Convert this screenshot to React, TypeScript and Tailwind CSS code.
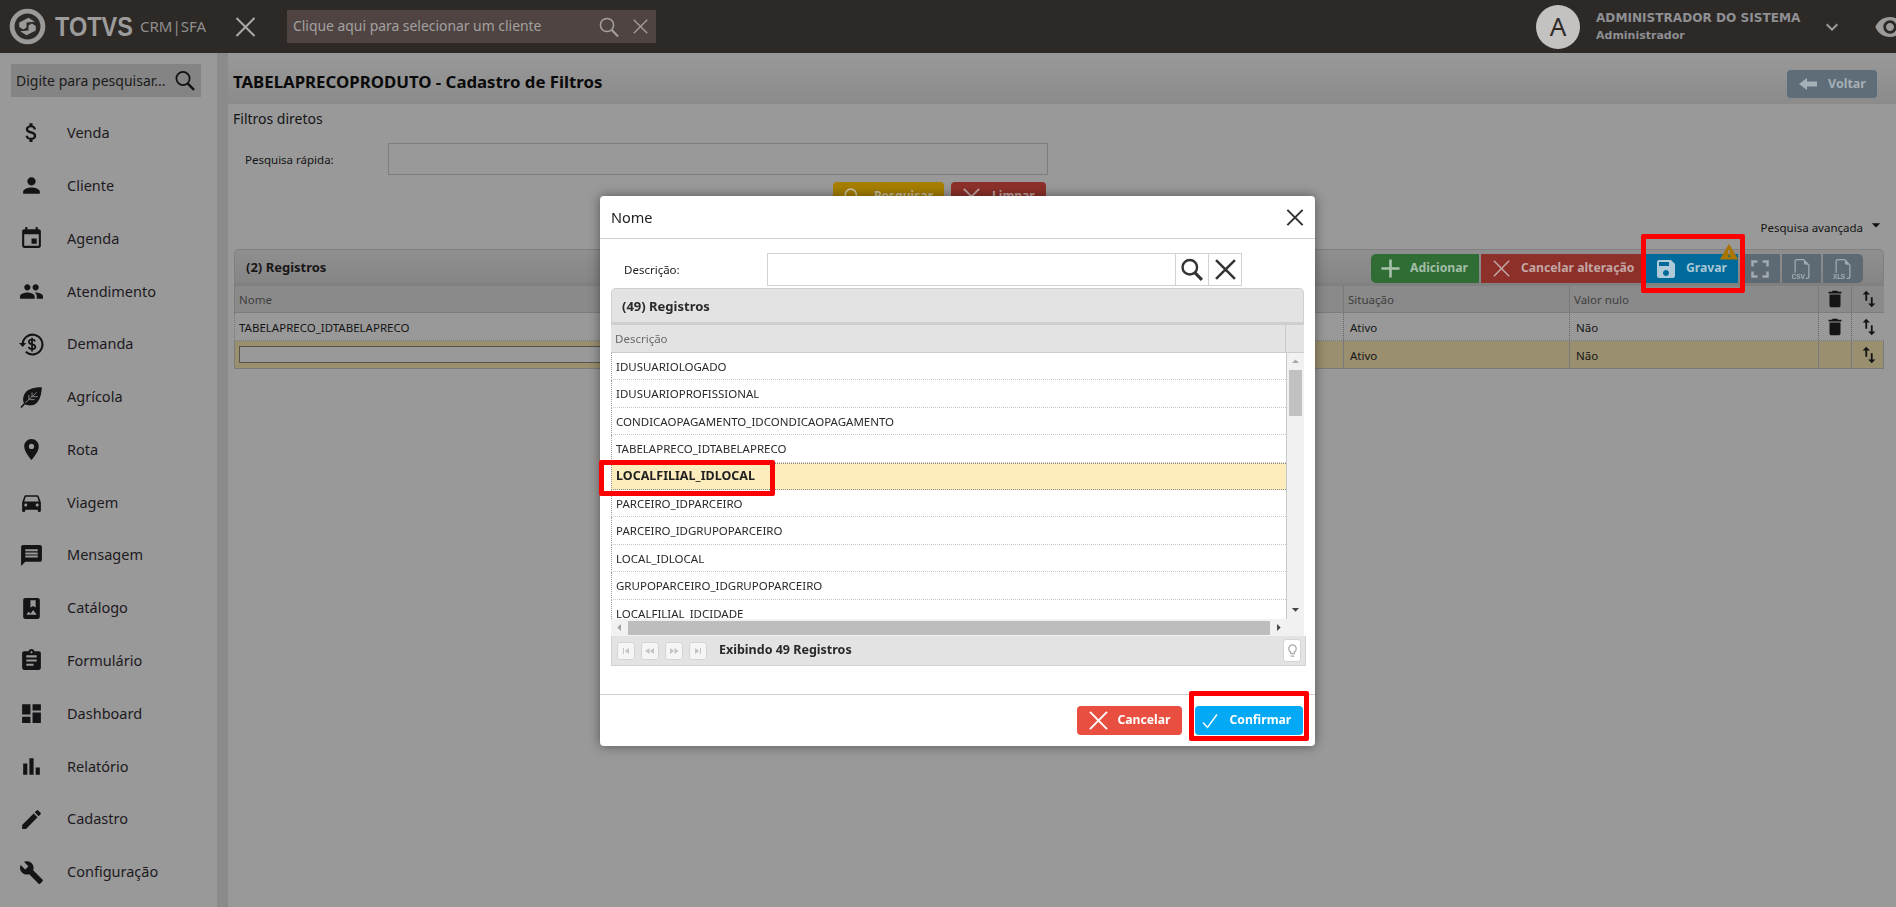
import React from "react";
import {
  MdAttachMoney, MdPerson, MdEvent, MdPeople, MdPlace, MdDirectionsCar, MdMessage,
  MdPhotoAlbum, MdAssignment, MdDashboard, MdBarChart, MdEdit, MdBuild, MdSave, MdFullscreen,
  MdDelete, MdSwapVert, MdVisibility, MdKeyboardArrowDown, MdWarning, MdAdd,
  MdSkipPrevious, MdSkipNext, MdFastRewind, MdFastForward, MdArrowDropDown, MdArrowDropUp, MdArrowLeft, MdArrowRight,
  MdOutlineLightbulb,
} from "react-icons/md";
import { BsFiletypeCsv, BsFiletypeXls } from "react-icons/bs";

const Cross = ({ className = "", sw = 2 }: { className?: string; sw?: number }) => (
  <svg viewBox="0 0 20 20" className={className} fill="none" stroke="currentColor" strokeWidth={sw}>
    <path d="M1 1L19 19M19 1L1 19" />
  </svg>
);

const Lens = ({ className = "", sw = 2 }: { className?: string; sw?: number }) => (
  <svg viewBox="0 0 20 20" className={className} fill="none" stroke="currentColor" strokeWidth={sw}>
    <circle cx="8" cy="8" r="6.6" />
    <path d="M12.6 12.8L19 19.4" strokeWidth={sw + 0.6} />
  </svg>
);

const DemandaIcon = ({ className = "" }: { className?: string }) => (
  <svg viewBox="0 0 24 24" className={className} fill="none" stroke="currentColor">
    <path d="M3.5 12a9.5 9.5 0 1 1 3 7" strokeWidth="2" />
    <path d="M0 10.5h7l-3.5 4z" fill="currentColor" stroke="none" />
    <path d="M15.5 9.2c-.4-1.2-1.6-1.8-3-1.8-1.7 0-3 .8-3 2.2 0 3 6.2 1.6 6.2 4.6 0 1.4-1.4 2.2-3.1 2.2-1.6 0-3-.7-3.3-2.1M12.5 5.6v13" strokeWidth="1.7" />
  </svg>
);

const LeafIcon = ({ className = "" }: { className?: string }) => (
  <svg viewBox="0 0 24 24" className={className} fill="none">
    <path d="M22 3C13 3 6.5 5 4.5 11.5c-1.2 4-.3 6.3 1.2 8C9 21.5 15 21 18 17c3-4 3.5-9 4-14z" fill="currentColor" />
    <path d="M2 22.5L6 18" stroke="currentColor" strokeWidth="1.6" />
    <path d="M6 18L17 8M9.5 15v-4.5M12.5 12.3V8M10 15h5M13 12.2h5" stroke="#999999" strokeWidth="0.8" />
  </svg>
);

const ArrowLeftIcon = ({ className = "" }: { className?: string }) => (
  <svg viewBox="0 0 18 12" className={className} fill="currentColor">
    <path d="M0 6L8 0v3.6h10v4.8H8V12z" />
  </svg>
);

const menu: [string, React.ComponentType<{ className?: string }>][] = [
  ["Venda", MdAttachMoney], ["Cliente", MdPerson], ["Agenda", MdEvent], ["Atendimento", MdPeople],
  ["Demanda", DemandaIcon], ["Agrícola", LeafIcon], ["Rota", MdPlace], ["Viagem", MdDirectionsCar],
  ["Mensagem", MdMessage], ["Catálogo", MdPhotoAlbum], ["Formulário", MdAssignment], ["Dashboard", MdDashboard],
  ["Relatório", MdBarChart], ["Cadastro", MdEdit], ["Configuração", MdBuild],
];

const rows = [
  "IDUSUARIOLOGADO", "IDUSUARIOPROFISSIONAL", "CONDICAOPAGAMENTO_IDCONDICAOPAGAMENTO", "TABELAPRECO_IDTABELAPRECO",
  "LOCALFILIAL_IDLOCAL", "PARCEIRO_IDPARCEIRO", "PARCEIRO_IDGRUPOPARCEIRO", "LOCAL_IDLOCAL",
  "GRUPOPARCEIRO_IDGRUPOPARCEIRO", "LOCALFILIAL_IDCIDADE",
];

const gridCols = "grid grid-cols-[1108px_226px_249px_33px_34px]";

function Sidebar() {
  return (
    <aside className="w-[217px] shrink-0 bg-[#999999] pt-[11px]">
      <div className="ml-[11px] w-[190px] h-[33px] bg-[#848484] flex items-center justify-between pl-[5px] pr-[6px] text-[14px] text-[#1b1b1b]">
        <span>Digite para pesquisar...</span>
        <Lens className="w-[20px] h-[21px] text-[#111]" sw={1.8} />
      </div>
      <nav className="mt-[9.6px]">
        {menu.map(([label, Icon]) => (
          <div key={label} className="h-[52.8px] flex items-center text-[14.5px] text-[#1d1a1e]">
            <span className="w-[67px] pl-[19px] shrink-0 flex">
              <Icon className="w-[25px] h-[25px] text-[#141416]" />
            </span>
            <span>{label}</span>
          </div>
        ))}
      </nav>
    </aside>
  );
}

function Header() {
  return (
    <header className="h-[53px] shrink-0 bg-[#2d2926] flex items-center text-[#9c9c9c] overflow-hidden">
      <svg viewBox="0 0 38 38" className="w-[37px] h-[37px] ml-[9px] shrink-0 text-[#9a9a9a]">
        <circle cx="19" cy="19" r="15.8" fill="none" stroke="currentColor" strokeWidth="5" />
        <path d="M10.5 15L20 10l6.5 4-8.5 1v5l-3.5 2-4-2.5z" fill="currentColor" />
        <path d="M27.5 23L18 28l-6.5-4 8.5-1v-5l3.5-2 4 2.5z" fill="currentColor" />
      </svg>
      <div className="ml-[9px] w-[77px] shrink-0 font-bold text-[28px] leading-none origin-left scale-x-[0.84] font-['Liberation_Sans',sans-serif] whitespace-nowrap">TOTVS</div>
      <div className="ml-[8px] text-[15px] shrink-0 whitespace-nowrap text-[#8f8f8f]">CRM|SFA</div>
      <Cross className="ml-[29px] w-[21px] h-[20px] shrink-0 text-[#aaaaaa]" sw={2} />
      <div className="ml-[31px] w-[369px] h-[33px] shrink-0 bg-[#4f4441] flex items-center justify-between pl-[6px] pr-[8px] text-[13.9px] text-[#a3a1a1]">
        <span>Clique aqui para selecionar um cliente</span>
        <div className="flex items-center gap-[14px]">
          <Lens className="w-[20px] h-[20px] text-[#a5a1a0]" sw={1.5} />
          <Cross className="w-[15px] h-[15px] text-[#a5a1a0]" sw={1.7} />
        </div>
      </div>
      <div className="ml-auto flex items-center shrink-0">
        <div className="w-[44px] h-[44px] rounded-full bg-[#c4c2c1] flex items-center justify-center text-[26px] text-[#2e2a28]">A</div>
        <div className="ml-[16px] w-[224px] font-['DejaVu_Sans',sans-serif] font-bold leading-[17px] text-[#8e9094]">
          <div className="text-[12.1px] whitespace-nowrap">ADMINISTRADOR DO SISTEMA</div>
          <div className="text-[11px]">Administrador</div>
        </div>
        <MdKeyboardArrowDown className="w-[24px] h-[24px] text-[#9d9d9d]" />
        <MdVisibility className="w-[32px] h-[32px] text-[#9b9b9b] ml-[30px] -mr-[10px]" />
      </div>
    </header>
  );
}

function ActionBtn({ className, children }: { className: string; children: React.ReactNode }) {
  return <div className={`h-[29px] flex items-center shrink-0 font-bold text-[12.2px] ${className}`}>{children}</div>;
}

const Sort = () => <MdSwapVert className="w-[22px] h-[22px] text-[#141414]" />;

function MainGrid() {
  return (
    <section className="mx-[6px] mr-[5px]">
      <div className="h-[37px] rounded-t-[5px] border border-b-[3px] border-[#808080] bg-gradient-to-b from-[#8f8f8f] to-[#858585] flex justify-between pl-[11px] pr-[20px] pt-[4px]">
        <span className="font-bold text-[13px] text-[#1a1718] mt-[4px]">(2) Registros</span>
        <div className="flex">
          <ActionBtn className="w-[108px] bg-[#2f6d35] text-[#a3bea7] rounded-l-[5px] pl-[4px] gap-[4px]">
            <MdAdd className="w-[31px] h-[31px] text-[#a9c2ab]" /><span>Adicionar</span>
          </ActionBtn>
          <ActionBtn className="w-[161px] ml-[2px] bg-[#8d302a] text-[#c2a6a4] pl-[12px] gap-[11px]">
            <Cross className="w-[17px] h-[17px] text-[#c2aaa8]" sw={1.7} /><span>Cancelar alteração</span>
          </ActionBtn>
          <ActionBtn className="w-[92px] ml-[4px] bg-[#006a9a] text-[#a8c7d6] pl-[8px] gap-[8px]">
            <MdSave className="w-[24px] h-[24px] text-[#aecad8]" /><span>Gravar</span>
          </ActionBtn>
          <ActionBtn className="w-[40px] ml-[2px] bg-[#5d6a74] justify-center"><MdFullscreen className="w-[30px] h-[30px] text-[#a3aab0]" /></ActionBtn>
          <ActionBtn className="w-[39px] ml-[2px] bg-[#5d6a74] justify-center"><BsFiletypeCsv className="w-[20px] h-[20px] text-[#a3aab0]" /></ActionBtn>
          <ActionBtn className="w-[40px] ml-[2px] bg-[#5d6a74] justify-center rounded-r-[5px]"><BsFiletypeXls className="w-[20px] h-[20px] text-[#a3aab0]" /></ActionBtn>
        </div>
      </div>
      <div className={`${gridCols} h-[27px] bg-[#8a8a8a] text-[11.5px] text-[#3e3e3e] border-l border-b border-[#7c7c7c]`}>
        <div className="pl-[4px] pt-[2px] flex items-center">Nome</div>
        <div className="pl-[4px] pt-[2px] flex items-center border-l border-[#7a7a7a]">Situação</div>
        <div className="pl-[4px] pt-[2px] flex items-center border-l border-[#7a7a7a]">Valor nulo</div>
        <div className="flex items-center justify-center border-l border-[#7a7a7a]"><MdDelete className="w-[22px] h-[22px] text-[#141414]" /></div>
        <div className="flex items-center justify-center border-l border-[#7a7a7a]"><Sort /></div>
      </div>
      <div className={`${gridCols} h-[28px] text-[11.5px] text-[#151515] border-l border-b border-dotted border-l-[#777] border-b-[#7a7a7a]`}>
        <div className="pl-[4px] pt-[2px] flex items-center">TABELAPRECO_IDTABELAPRECO</div>
        <div className="pl-[6px] pt-[2px] flex items-center border-l border-dotted border-[#666]">Ativo</div>
        <div className="pl-[6px] pt-[2px] flex items-center border-l border-dotted border-[#666]">Não</div>
        <div className="flex items-center justify-center border-l border-dotted border-[#666]"><MdDelete className="w-[22px] h-[22px] text-[#141414]" /></div>
        <div className="flex items-center justify-center border-l border-dotted border-[#666]"><Sort /></div>
      </div>
      <div className={`${gridCols} h-[28px] bg-[#9a8f6f] text-[11.5px] text-[#151515] border border-t-0 border-[#7a7a7a]`}>
        <div className="flex items-center pl-[4px]">
          <div className="w-[900px] h-[17px] bg-[#999999] border border-[#55554e]" />
        </div>
        <div className="pl-[6px] pt-[2px] flex items-center border-l border-[#7a7a7a]">Ativo</div>
        <div className="pl-[6px] pt-[2px] flex items-center border-l border-[#7a7a7a]">Não</div>
        <div className="border-l border-[#7a7a7a]" />
        <div className="flex items-center justify-center border-l border-[#7a7a7a]"><Sort /></div>
      </div>
    </section>
  );
}

function Content() {
  return (
    <main className="flex-1 min-w-0 flex flex-col">
      <div className="h-[51px] shrink-0 bg-gradient-to-b from-[#999999] to-[#8b8b8b] flex items-start justify-between pl-[5px] pr-[19px] pt-[17px]">
        <h1 className="font-bold text-[16.8px] leading-[24px] text-[#0a0a0a]">TABELAPRECOPRODUTO - Cadastro de Filtros</h1>
        <div className="w-[90px] h-[28px] bg-[#5f6d78] rounded-[4px] flex items-center pl-[12px] gap-[11px] font-bold text-[12.5px] text-[#a5afb6]">
          <ArrowLeftIcon className="w-[18px] h-[12px]" /><span>Voltar</span>
        </div>
      </div>
      <div className="flex-1 bg-[#999999] mr-[7px] text-[#141414] pt-[6px]">
        <div className="pl-[5px] text-[14px] leading-[18px]">Filtros diretos</div>
        <div className="mt-[15px] flex items-center h-[32px]">
          <span className="w-[160px] pl-[17px] pt-[2px] text-[11.5px] shrink-0">Pesquisa rápida:</span>
          <div className="w-[660px] h-[32px] border border-[#7d7d7d]" />
        </div>
        <div className="mt-[7px] flex ml-[605px] gap-[7px]">
          <ActionBtn className="w-[111px] bg-[#a77f00] text-[#c9c0a0] rounded-[4px] pl-[11px] gap-[13px]">
            <Lens className="w-[17px] h-[17px] text-[#c9c0a0]" />Pesquisar
          </ActionBtn>
          <ActionBtn className="w-[95px] bg-[#8d302a] text-[#c2a6a4] rounded-[4px] pl-[12px] gap-[12px]">
            <Cross className="w-[17px] h-[17px] text-[#c2aaa8]" />Limpar
          </ActionBtn>
        </div>
        <div className="h-[38px] flex justify-end items-start pt-[7px] pr-[3px] text-[11.5px]">
          <span className="leading-[20px]">Pesquisa avançada</span>
          <MdArrowDropDown className="w-[20px] h-[20px] ml-[3px] -mt-[3px] text-[#111]" />
        </div>
        <MainGrid />
      </div>
    </main>
  );
}

function Modal() {
  return (
    <div className="fixed left-[600px] top-[196px] w-[715px] h-[550px] bg-white rounded-[4px] shadow-[0_0_12px_rgba(0,0,0,0.45)] flex flex-col text-[#222]">
      <div className="h-[43px] shrink-0 border-b border-[#d0d0d0] flex items-center justify-between pl-[11px] pr-[11px]">
        <span className="text-[14.5px] pt-[1px] text-[#222]">Nome</span>
        <Cross className="w-[18px] h-[17px] text-[#333]" sw={2.4} />
      </div>
      <div className="flex-1 px-[11px]">
        <div className="mt-[14px] h-[33px] flex items-center">
          <span className="w-[156px] pl-[13px] pt-[1px] text-[11.5px]">Descrição:</span>
          <div className="h-[33px] w-[475px] border border-[#d2d2d2] flex">
            <div className="flex-1" />
            <div className="w-[33px] border-l border-[#d2d2d2] flex items-center justify-center"><Lens className="w-[22px] h-[23px] text-[#333]" sw={2.2} /></div>
            <div className="w-[33px] border-l border-[#d2d2d2] flex items-center justify-center"><Cross className="w-[21px] h-[21px] text-[#333]" sw={2.4} /></div>
          </div>
        </div>
        <div className="mt-[2px] h-[37px] rounded-t-[5px] border border-b-[3px] border-[#cfcfcf] bg-[#e3e3e3] flex items-center pl-[10px] pt-[2px] font-bold text-[13px] text-[#2a2a2a]">(49) Registros</div>
        <div className="h-[28px] bg-[#e3e3e3] border-b border-[#cccccc] flex text-[11.5px] text-[#6a6a6a]">
          <div className="w-[675px] pl-[4px] flex items-center border-r border-[#c8c8c8]">Descrição</div>
        </div>
        <div className="flex h-[283px]">
          <div className="w-[676px] flex flex-col">
            <div className="h-[266px] overflow-hidden border-r border-[#c8c8c8]">
              {rows.map((r) => {
                const sel = r === "LOCALFILIAL_IDLOCAL";
                return (
                  <div key={r} className={`h-[27.4px] shrink-0 pl-[4px] pt-[1px] flex items-center border-l border-dotted border-l-[#999] ${sel ? "bg-[#fdedbd] font-bold text-[12.5px] text-[#222] border-y border-y-[#8a8a8a]" : "text-[11.5px] border-b border-b-[#c8c8c8] text-[#2a2a2a]"}`}>{r}</div>
                );
              })}
            </div>
            <div className="h-[17px] bg-[#f1f1f1] flex items-center">
              <MdArrowLeft className="w-[17px] h-[17px] text-[#a0a0a0]" />
              <div className="flex-1 h-[14px] bg-[#bdbdbd]" />
              <MdArrowRight className="w-[17px] h-[17px] text-[#444]" />
            </div>
          </div>
          <div className="flex-1 bg-[#f1f1f1] flex flex-col items-center">
            <MdArrowDropUp className="w-[17px] h-[17px] text-[#a8a8a8]" />
            <div className="w-[13px] h-[46px] bg-[#c1c1c1]" />
            <MdArrowDropDown className="w-[17px] h-[17px] mt-[185px] text-[#444]" />
          </div>
        </div>
        <div className="h-[30px] -mr-[2px] bg-[#e3e3e3] border-b border-x border-[#d2d2d2] flex items-center pl-[5px] pr-[4px] font-bold text-[12.5px] text-[#2a2a2a]">
          {[MdSkipPrevious, MdFastRewind, MdFastForward, MdSkipNext].map((I, i) => (
            <span key={i} className="w-[18px] h-[18px] mr-[6px] rounded-[3px] bg-[#f5f5f5] border border-[#d4d4d4] flex items-center justify-center">
              <I className="w-[12px] h-[12px] text-[#c4c4c4]" />
            </span>
          ))}
          <span className="ml-[6px]">Exibindo 49 Registros</span>
          <span className="ml-auto w-[18px] h-[23px] rounded-[3px] bg-white border border-[#d4d4d4] flex items-center justify-center">
            <MdOutlineLightbulb className="w-[15px] h-[15px] text-[#aaa]" />
          </span>
        </div>
      </div>
      <div className="h-[52px] shrink-0 border-t border-[#d0d0d0] flex items-start justify-end gap-[13px] pt-[11px] pr-[12.5px]">
        <div className="w-[105px] h-[29px] rounded-[4px] bg-[#e94f41] text-white font-bold text-[12.2px] flex items-center pl-[12px] gap-[10px]">
          <Cross className="w-[19px] h-[19px]" sw={2} />Cancelar
        </div>
        <div className="w-[108px] h-[29px] rounded-[4px] bg-[#03a9f4] text-white font-bold text-[12.2px] flex items-center pl-[7px] gap-[12px]">
          <svg viewBox="0 0 16 16" className="w-[16px] h-[16px]" fill="none" stroke="currentColor" strokeWidth="1.4"><path d="M1 9.5L5.5 14.5L15 1.5" /></svg>Confirmar
        </div>
      </div>
    </div>
  );
}

export default function App() {
  return (
    <div className="relative h-[907px] w-[1896px] overflow-hidden flex flex-col bg-[#999999] font-['Noto_Sans','Open_Sans',sans-serif]">
      <Header />
      <div className="flex-1 flex min-h-0">
        <Sidebar />
        <div className="w-[11px] shrink-0 bg-[#8b8b8b]" />
        <Content />
      </div>
      <Modal />
      {/* Annotation boxes and warning badge */}
      <div className="absolute left-[1641px] top-[234px] w-[104px] h-[59px] border-[5px] border-[#ff0000] rounded-[2px]" />
      <MdWarning className="absolute left-[1719px] top-[242px] w-[20px] h-[20px] text-[#a97400]" />
      <div className="absolute left-[599px] top-[460px] w-[176px] h-[36px] border-[5px] border-[#ff0000] rounded-[2px]" />
      <div className="absolute left-[1189px] top-[691px] w-[120px] h-[50px] border-[5px] border-[#ff0000] rounded-[2px]" />
    </div>
  );
}
